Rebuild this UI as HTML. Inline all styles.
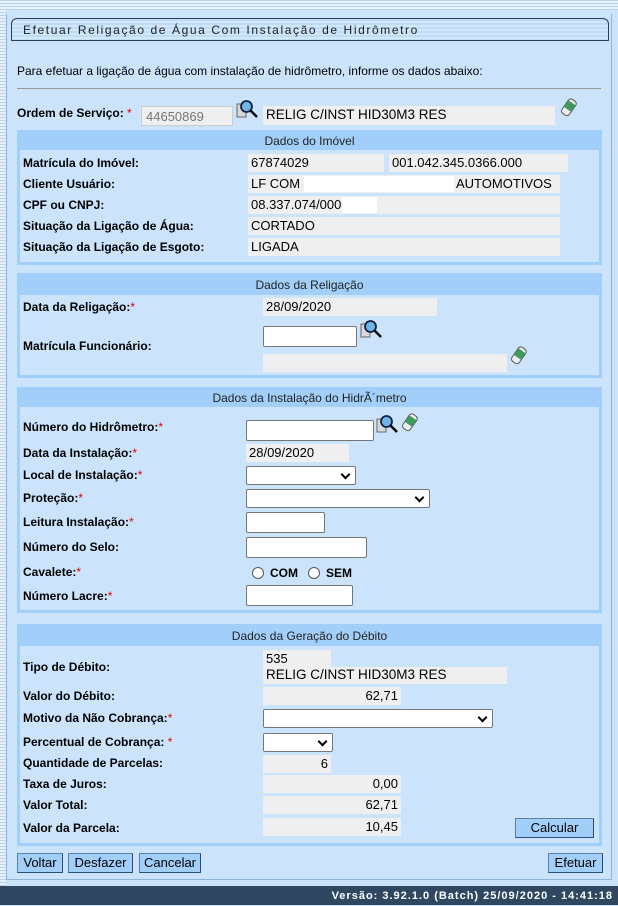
<!DOCTYPE html>
<html><head><meta charset="utf-8">
<style>
*{margin:0;padding:0;box-sizing:border-box}
body{width:618px;height:905px;position:relative;overflow:hidden;background:#cbe4fb;font-family:"Liberation Sans",Arial,sans-serif;color:#000}
.stripe{position:absolute;left:0;top:0;width:6px;height:886px;background:repeating-linear-gradient(180deg,#b9d3ea 0 1px,#e6f1fb 1px 3px)}
.topl{position:absolute;left:0;top:0;width:618px;height:10px;background:repeating-linear-gradient(180deg,#b9d3ea 0 1px,#e6f1fb 1px 3px)}
.a{position:absolute}
.l{position:absolute;left:23px;font-weight:bold;font-size:12px;white-space:nowrap}
.r{color:#d00;font-weight:normal}
.f{position:absolute;background:#efefef;font-size:13px;padding-left:3px;height:18px;line-height:18px;white-space:nowrap}
.fr{text-align:right;padding-right:3px}
.i{position:absolute;background:#fff;border:1px solid #767676;border-radius:2px;height:21px}
.s{position:absolute;background:#fff;border:1px solid #767676;border-radius:2px;height:19px}
.s:after{content:"";position:absolute;right:6px;top:4px;width:5px;height:5px;border-right:2px solid #000;border-bottom:2px solid #000;transform:rotate(45deg)}
.sec{position:absolute;left:17px;width:585px;border:3px solid #a2cff9}
.sec .h{background:#a2cff9;height:17px;text-align:center;font-size:12px;line-height:15px;color:#222}
.b{position:absolute;background:#a2cff9;border:1px solid #5d7fa3;border-right-color:#2d4d70;border-bottom-color:#2d4d70;font-size:13px;height:20px;line-height:18px;text-align:center;color:#000}
</style></head><body>
<div class="topl"></div><div class="stripe"></div>
<div class="a" style="left:6px;top:14px;width:606px;height:866px;border:1px solid #8fb6da;border-top:none"></div>
<div class="a" style="left:11px;top:18px;width:598px;height:23px;border:1px solid #2a3f5a;border-radius:6px 6px 0 0;background:repeating-linear-gradient(180deg,#bfdcf6 0 2px,#d3e8fb 2px 4px);font-size:12px;letter-spacing:1.6px;padding-left:11px;line-height:22px;color:#222">Efetuar Religação de Água Com Instalação de Hidrômetro</div>
<div class="a" style="left:17px;top:64px;font-size:12px">Para efetuar a ligação de água com instalação de hidrômetro, informe os dados abaixo:</div>
<div class="a" style="left:17px;top:88px;width:584px;height:1px;background:#999"></div>

<svg width="0" height="0" style="position:absolute"><defs>
<g id="mg"><rect x="1" y="5" width="9" height="13" fill="#d8d8d8" stroke="#666"/><circle cx="10.5" cy="7.5" r="5.5" fill="#6fb6e6" stroke="#124" stroke-width="1.8"/><line x1="14.5" y1="11.5" x2="21" y2="18" stroke="#000" stroke-width="2.4"/></g>
<g id="er"><g transform="rotate(35 9 10)"><rect x="4" y="1" width="9" height="17" rx="3" fill="#eee" stroke="#555"/><rect x="4.5" y="4" width="8" height="8" fill="#3c9b5a"/></g></g>
</defs></svg>

<div class="l" style="top:106px;left:17px">Ordem de Serviço: <span class="r">*</span></div>
<div class="f" style="left:141px;top:106px;width:92px;height:20px;line-height:20px;color:#777;border:1px solid #ccc;padding-left:4px">44650869</div>
<svg class="a" style="left:236px;top:99px" width="24" height="21"><use href="#mg"/></svg>
<div class="f" style="left:263px;top:106px;width:292px;height:19px;font-size:13.5px">RELIG C/INST HID30M3 RES</div>
<svg class="a" style="left:560px;top:98px" width="20" height="22"><use href="#er"/></svg>

<div class="sec" style="top:130px;height:135px"><div class="h" style="line-height:17px">Dados do Imóvel</div></div>
<div class="l" style="top:156px">Matrícula do Imóvel:</div>
<div class="f" style="left:248px;top:154px;width:136px">67874029</div>
<div class="f" style="left:389px;top:154px;width:179px">001.042.345.0366.000</div>
<div class="l" style="top:177px">Cliente Usuário:</div>
<div class="f" style="left:248px;top:175px;width:312px">LF COM</div>
<div class="a" style="left:304px;top:176px;width:150px;height:16px;background:#fff"></div>
<div class="a" style="left:456px;top:176px;font-size:13px">AUTOMOTIVOS</div>
<div class="l" style="top:198px">CPF ou CNPJ:</div>
<div class="f" style="left:248px;top:196px;width:312px">08.337.074/000</div>
<div class="a" style="left:342px;top:197px;width:35px;height:16px;background:#fff"></div>
<div class="l" style="top:219px">Situação da Ligação de Água:</div>
<div class="f" style="left:248px;top:217px;width:312px">CORTADO</div>
<div class="l" style="top:240px">Situação da Ligação de Esgoto:</div>
<div class="f" style="left:248px;top:238px;width:312px">LIGADA</div>

<div class="sec" style="top:273px;height:105px"><div class="h" style="line-height:18px;height:19px">Dados da Religação</div></div>
<div class="l" style="top:300px">Data da Religação:<span class="r">*</span></div>
<div class="f" style="left:263px;top:298px;width:174px">28/09/2020</div>
<div class="i" style="left:263px;top:326px;width:94px"></div>
<svg class="a" style="left:360px;top:319px" width="24" height="21"><use href="#mg"/></svg>
<div class="l" style="top:339px">Matrícula Funcionário:</div>
<div class="f" style="left:263px;top:354px;width:244px"></div>
<svg class="a" style="left:510px;top:346px" width="20" height="22"><use href="#er"/></svg>

<div class="sec" style="top:387px;height:226px"><div class="h" style="line-height:17px">Dados da Instalação do HidrÃ´metro</div></div>
<div class="l" style="top:420px">Número do Hidrômetro:<span class="r">*</span></div>
<div class="i" style="left:246px;top:420px;width:128px"></div>
<svg class="a" style="left:376px;top:414px" width="24" height="21"><use href="#mg"/></svg>
<svg class="a" style="left:401px;top:413px" width="20" height="22"><use href="#er"/></svg>
<div class="l" style="top:446px">Data da Instalação:<span class="r">*</span></div>
<div class="f" style="left:246px;top:444px;width:103px">28/09/2020</div>
<div class="l" style="top:468px">Local de Instalação:<span class="r">*</span></div>
<div class="s" style="left:246px;top:466px;width:110px"></div>
<div class="l" style="top:491px">Proteção:<span class="r">*</span></div>
<div class="s" style="left:246px;top:489px;width:184px"></div>
<div class="l" style="top:515px">Leitura Instalação:<span class="r">*</span></div>
<div class="i" style="left:246px;top:512px;width:79px"></div>
<div class="l" style="top:540px">Número do Selo:</div>
<div class="i" style="left:246px;top:537px;width:121px"></div>
<div class="l" style="top:565px">Cavalete:<span class="r">*</span></div>
<div class="a" style="left:252px;top:567px;width:12px;height:12px;border:1px solid #555;border-radius:50%;background:#fff"></div>
<div class="a" style="left:270px;top:566px;font-size:12px;font-weight:bold">COM</div>
<div class="a" style="left:308px;top:567px;width:12px;height:12px;border:1px solid #555;border-radius:50%;background:#fff"></div>
<div class="a" style="left:326px;top:566px;font-size:12px;font-weight:bold">SEM</div>
<div class="l" style="top:589px">Número Lacre:<span class="r">*</span></div>
<div class="i" style="left:246px;top:585px;width:107px"></div>

<div class="sec" style="top:624px;height:222px"><div class="h" style="line-height:18px;height:19px">Dados da Geração do Débito</div></div>
<div class="f" style="left:263px;top:650px;width:68px;height:17px;line-height:17px">535</div>
<div class="f" style="left:263px;top:667px;width:244px;height:17px;line-height:15px;font-size:13.5px">RELIG C/INST HID30M3 RES</div>
<div class="l" style="top:660px">Tipo de Débito:</div>
<div class="l" style="top:689px">Valor do Débito:</div>
<div class="f fr" style="left:263px;top:687px;width:138px">62,71</div>
<div class="l" style="top:711px">Motivo da Não Cobrança:<span class="r">*</span></div>
<div class="s" style="left:263px;top:709px;width:230px"></div>
<div class="l" style="top:735px">Percentual de Cobrança: <span class="r">*</span></div>
<div class="s" style="left:263px;top:733px;width:70px"></div>
<div class="l" style="top:756px">Quantidade de Parcelas:</div>
<div class="f fr" style="left:263px;top:755px;width:68px">6</div>
<div class="l" style="top:777px">Taxa de Juros:</div>
<div class="f fr" style="left:263px;top:775px;width:138px">0,00</div>
<div class="l" style="top:798px">Valor Total:</div>
<div class="f fr" style="left:263px;top:796px;width:138px">62,71</div>
<div class="l" style="top:821px">Valor da Parcela:</div>
<div class="f fr" style="left:263px;top:818px;width:138px">10,45</div>
<div class="b" style="left:515px;top:818px;width:79px">Calcular</div>

<div class="b" style="left:17px;top:853px;width:46px">Voltar</div>
<div class="b" style="left:68px;top:853px;width:65px">Desfazer</div>
<div class="b" style="left:139px;top:853px;width:62px">Cancelar</div>
<div class="b" style="left:548px;top:853px;width:55px">Efetuar</div>

<div class="a" style="left:0;top:886px;width:618px;height:19px;background:#2f4761;color:#fff;font-size:11px;font-weight:bold;letter-spacing:1px;text-align:right;padding-right:5px;line-height:20px">Versão: 3.92.1.0 (Batch) 25/09/2020 - 14:41:18</div>
</body></html>
